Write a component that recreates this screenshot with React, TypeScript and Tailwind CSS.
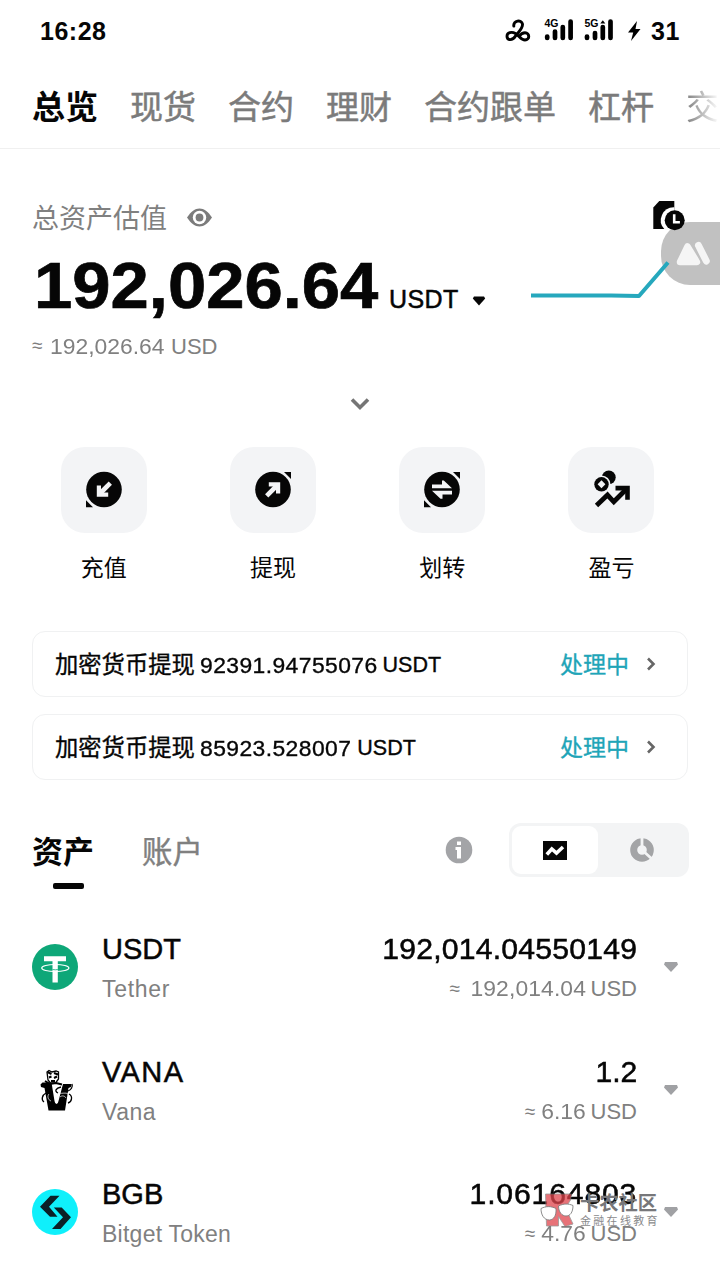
import React from "react";

const tabs = ["现货", "合约", "理财", "合约跟单", "杠杆"];

function StatusIcons() {
  return (
    <svg width="146" height="34" viewBox="0 0 146 34" fill="none" stroke="#000">
      <path
        d="M9.800 11C9 5.500 17.500 4 18.500 9C19 13 15 16.500 11.500 21C8.500 26 3 25.500 3 21.300C3 17.500 7.500 16.200 11.500 18.500C15.500 21 17 25 21 25C26 25 26 17.800 21 17.800C18 17.800 16.500 19.500 15 21.500"
        strokeWidth="2.900"
        strokeLinecap="round"
      />
      <g strokeWidth="4.700" strokeLinecap="round">
        <path d="M43.200 21.500v1.500M51 16.500v6.500M58.800 12v11M66.600 6.500v16.500M83 21.500v1.500M91 18v5M98.800 12v11M106.500 6.500v16.500" />
      </g>
      <path d="M96.300 8.500l2.500-3.200 2.500 3.200z" fill="#000" stroke="none" />
      <path d="M133 6l-9 11.500h5.200L127 26l9.500-12h-5z" fill="#000" stroke="none" />
      <g fill="#000" stroke="#fff" strokeWidth="2" paintOrder="stroke" fontFamily="Liberation Sans" fontWeight="700" fontSize="10.500">
        <text x="40.500" y="12">4G</text>
        <text x="80.500" y="12">5G</text>
      </g>
    </svg>
  );
}

function ReportIcon() {
  return (
    <svg className="absolute top-[200px] left-[652px] z-20" width="34" height="32" viewBox="0 0 34 32">
      <path d="M1.300 7.500l6-6.500h15v28h-21z" fill="#060606" />
      <path d="M22.300 7.300a13 13 0 0 0-9.800 22h9.800z" fill="#fff" />
      <circle cx="22.700" cy="20.300" r="10" fill="#060606" />
      <path d="M22.200 14.300v8h5.700" fill="none" stroke="#fff" strokeWidth="2.600" />
    </svg>
  );
}

function ActionGlyph({ kind }: { kind: string }) {
  if (kind === "pnl") {
    return (
      <svg className="relative left-px overflow-visible" width="38" height="38" viewBox="0 0 38 38">
        <circle cx="15.800" cy="6.300" r="6.900" fill="#060606" />
        <circle cx="8.500" cy="13.300" r="8.900" fill="#f3f4f6" />
        <circle cx="8.500" cy="13.300" r="7.200" fill="#060606" />
        <path d="M8.500 9.300l3.900 4-3.900 4-3.900-4z" fill="#f3f4f6" />
        <path d="M3.500 34.500L14.500 24l6.300 6.800L33 18.500" fill="none" stroke="#060606" strokeWidth="4.800" />
        <path d="M22.500 14.700h14.300v14h-4.600v-9.300h-9.700z" fill="#060606" />
      </svg>
    );
  }
  return (
    <svg width="38" height="38" viewBox="0 0 38 38">
      {kind !== "out" && <path d="M1 29.300l7 7H1z" fill="#060606" />}
      {kind !== "in" && <path d="M30 1h7v7z" fill="#060606" />}
      <circle cx="19" cy="18.500" r="17.800" fill="#060606" />
      {kind === "in" && (
        <g fill="none" stroke="#f3f4f6">
          <path d="M25.300 12.200L14.500 23" strokeWidth="4.600" />
          <path d="M13.900 14.500v9.200h9.300" strokeWidth="4.200" />
        </g>
      )}
      {kind === "out" && (
        <g fill="none" stroke="#f3f4f6">
          <path d="M12.700 24.800L23.500 14" strokeWidth="4.600" />
          <path d="M14.800 13.300h9.300v9.200" strokeWidth="4.200" />
        </g>
      )}
      {kind === "swap" && (
        <path d="M9 13.500h10v-4h1.800l8.200 7.800H9zM29 23.500h-9.500v4.300h-2L9 19.700h20z" fill="#f3f4f6" />
      )}
    </svg>
  );
}

const actions = [
  { kind: "in", label: "充值" },
  { kind: "out", label: "提现" },
  { kind: "swap", label: "划转" },
  { kind: "pnl", label: "盈亏" },
];

const withdrawals = ["92391.94755076", "85923.528007"];

function TetherLogo() {
  return (
    <svg width="46" height="46" viewBox="0 0 46 46">
      <circle cx="23" cy="23" r="23" fill="#0ea778" />
      <path d="M12 12.300h22v5h-8.200v21.200h-5.300v-21.200H12z" fill="#fff" />
      <ellipse cx="23.300" cy="24" rx="13.600" ry="3.500" fill="none" stroke="#fff" strokeWidth="1.100" />
      <path d="M20.500 25.500q3 .6 5.300 0" fill="none" stroke="#0ea778" strokeWidth=".8" />
    </svg>
  );
}

function VanaLogo() {
  return (
    <svg width="46" height="46" viewBox="0 0 46 46" fill="none" stroke="#000">
      <path d="M8.500 17.500l2-2H19.500l3 18.500q.5 3 2 3t2-3L31 17h8.500l-.5 3-2.500 1-3.500 22.500H16.500L12.500 21 9 20z" fill="#000" stroke="none" />
      <path d="M16 13l-1-8 2-1.500 3 1.500 4-1 2.500 1v7l-3 4h-5z" fill="#fff" strokeWidth="1.300" />
      <path d="M15.500 5l4 2M17 10.500l2.500-1M22 6l4 1.500M22 11l3-1.500M19 14h4M13 14l5 3 6-1 6 1.500" strokeWidth="2" />
      <path d="M14 26c-4 2-5 7-2 9M37 27c4 2 3 8-1 9M36 24c3-1 5-4 4-7M29 20c-5 1-7 4-3 6" strokeWidth="1.300" />
      <path d="M27 26c3 1 7-1 9 1M17 27c-2 2-1 6 2 7M28 30c2-2 5-1 6 1" stroke="#fff" strokeWidth=".7" />
    </svg>
  );
}

function BitgetLogo() {
  return (
    <svg width="46" height="46" viewBox="0 0 46 46">
      <circle cx="23" cy="23" r="23" fill="#0ff0fb" />
      <path d="M18.500 6.700H27.500L17 17.700l8.500 10H18l-10-10z" fill="#0b2027" />
      <path d="M21.800 18.500h7.900L39 28.300 28.500 40h-8.500l11-11.700z" fill="#0b2027" />
    </svg>
  );
}

const coins = [
  { logo: <TetherLogo />, symbol: "USDT", name: "Tether", amount: "192,014.04550149", fiat: "192,014.04", fiatClass: "w-[118px] text-right tracking-[0.1px]", nameClass: "tracking-[0.7px]", symbolClass: "", amountClass: "tracking-[0.2px]" },
  { logo: <VanaLogo />, symbol: "VANA", name: "Vana", amount: "1.2", fiat: "6.16", fiatClass: "", nameClass: "tracking-[0.5px]", symbolClass: "tracking-[1.4px]", amountClass: "" },
  { logo: <BitgetLogo />, symbol: "BGB", name: "Bitget Token", amount: "1.06164803", fiat: "4.76", fiatClass: "", nameClass: "tracking-[0.25px]", symbolClass: "", amountClass: "tracking-[0.8px]" },
];

function FloatingHandle() {
  return (
    <div className="absolute top-[222px] right-0 h-[63px] w-[59px] rounded-l-[29px] bg-[#c1c1c1]">
      <svg className="absolute top-[18px] left-[14px]" width="38" height="28" viewBox="0 0 38 28">
        <path d="M5 22L12.500 6.500L22 22z" fill="#f5f5f5" stroke="#f5f5f5" strokeWidth="6.500" strokeLinejoin="round" />
        <path d="M17.500 -1L29.500 26" stroke="#c1c1c1" strokeWidth="4" />
        <path d="M23.500 5.500l7.800 15.500" stroke="#f5f5f5" strokeWidth="7" strokeLinecap="round" />
      </svg>
    </div>
  );
}

function Watermark() {
  return (
    <div className="pointer-events-none absolute top-[1192px] left-[540px] z-20 flex gap-1">
      <svg width="36" height="37" viewBox="0 0 36 37" className="opacity-75">
        <path d="M5.500 2h26l-1 6-5 8 7.500 16-8 2.500-6.500-10V34H6.500z" fill="#e0444c" stroke="#777" strokeWidth=".8" />
        <path d="M1 16.500c5-2.500 10-2.500 15 0 .5 7-2 11-6.500 11.500C4 28 1 23 1 16.500zM18.500 14c5-2.500 10-2.500 14.500-.5 0 7-3 10.500-7 10.500s-7.500-4-7.500-10z" fill="#fff" stroke="#555" strokeWidth=".9" />
      </svg>
      <div className="flex flex-col whitespace-nowrap">
        <span className="mt-[2px] text-[19.3px] leading-[20px] font-bold text-[#77777a]">卡农社区</span>
        <span className="text-[11px] leading-[14px] tracking-[2.3px] text-[#8a8a8c]">金融在线教育</span>
      </div>
    </div>
  );
}

export default function App() {
  return (
    <div className="relative h-[1280px] w-[720px] overflow-hidden bg-white font-['Liberation_Sans','Noto_Sans_CJK_SC',sans-serif] text-[#060606]">
      <header className="flex h-[149px] flex-col border-b border-[#f0f0f0]">
        <div className="flex h-[62px] items-center justify-between pt-[2px] pr-[40px] pl-[40px] text-[25px] font-bold">
          <span className="tracking-[0.5px]">16:28</span>
          <div className="flex items-center gap-[1px]">
            <StatusIcons />
            <span className="tracking-[0.6px]">31</span>
          </div>
        </div>
        <nav className="flex h-[86px] items-center gap-[32px] overflow-hidden pt-[6px] pl-[32px] text-[33px] leading-[48px] whitespace-nowrap text-[#7b7b7b]">
          <span className="font-bold text-[#060606]">总览</span>
          {tabs.map((t) => (
            <span key={t} className="[-webkit-text-stroke:0.5px]">{t}</span>
          ))}
          <span className="bg-linear-to-r from-[#808080] to-white bg-clip-text text-transparent">交</span>
        </nav>
      </header>

      <section className="flex h-[271px] flex-col px-[32px]">
        <div className="mt-[50px] flex h-[38px] items-center gap-[20px] text-[27px] text-[#808080]">
          <span className="pt-[2px]">总资产估值</span>
          <svg className="mb-[2px]" width="25" height="19" viewBox="0 0 25 19">
            <path d="M0 9.500C4 3.500 8 .5 12.500 .5S21 3.500 25 9.500c-4 6-8 9-12.500 9S4 15.500 0 9.500z" fill="#7b7b7b" />
            <circle cx="12.500" cy="9.500" r="6.700" fill="#fff" />
            <circle cx="12.500" cy="9.500" r="3.900" fill="#7b7b7b" />
          </svg>
        </div>
        <div className="mt-[13px] flex h-[72px] items-baseline">
          <span className="ml-[2px] w-[349px] origin-left scale-x-[1.075] text-[64px] leading-[72px] font-bold [-webkit-text-stroke:0.7px]">192,026.64</span>
          <span className="ml-[6px] w-[71px] text-[25px] tracking-[0.4px] [-webkit-text-stroke:0.5px]">USDT</span>
          <svg className="mb-[3px] ml-[12px] self-end -translate-y-[12px]" width="14" height="12" viewBox="0 0 14 12">
            <path d="M2 1.500h10l1.200 2-6.200 7-6.200-7z" fill="#060606" />
          </svg>
          <svg className="relative z-10 mt-[7px] ml-[44px] shrink-0 self-start" width="142" height="44" viewBox="0 0 142 44">
            <path d="M1 38.500h80l28 .5L138 5.500" fill="none" stroke="#26a8bd" strokeWidth="4" strokeLinejoin="round" />
          </svg>
        </div>
        <div className="mt-[8px] flex h-[32px] items-center text-[22px] text-[#808080]">
          <span className="mr-[7px] w-[11px] text-[19px]">≈</span>
          <span className="w-[115px] origin-left scale-x-[1.04]">192,026.64</span>
          <span className="ml-[6px]">USD</span>
        </div>
        <svg className="mx-auto mt-[35px]" width="20" height="14" viewBox="0 0 20 14">
          <path d="M2 2.500l8 8 8-8" fill="none" stroke="#757575" strokeWidth="3.600" />
        </svg>
      </section>

      <section className="grid h-[211px] grid-cols-4 pt-[27px] pr-[24px] pl-[19px]">
        {actions.map((a) => (
          <div key={a.kind} className="flex flex-col items-center">
            <div className="flex h-[86px] w-[86px] items-center justify-center rounded-[24px] bg-[#f3f4f6]">
              <ActionGlyph kind={a.kind} />
            </div>
            <span className="mt-[17.500px] text-[23px] leading-[34px]">{a.label}</span>
          </div>
        ))}
      </section>

      <section className="flex flex-col gap-[17px] px-[32px]">
        {withdrawals.map((w) => (
          <div key={w} className="flex h-[66px] items-center rounded-[13px] border-[1.500px] border-[#f0f1f2] pt-[2px] pr-[31px] pl-[22px] [-webkit-text-stroke:0.35px]">
            <span className="text-[23.3px]">加密货币提现</span>
            <span className="ml-[5px] origin-left scale-x-[1.04] text-[22px] tracking-[0.4px]">{w}</span>
            <span className="ml-[12px] text-[21.5px]">USDT</span>
            <span className="ml-auto text-[23px] text-[#1fa5b8]">处理中</span>
            <svg className="mb-[2px] ml-[17px]" width="10" height="14" viewBox="0 0 10 14">
              <path d="M2 1.500l5.500 5.500L2 12.500" fill="none" stroke="#666" strokeWidth="2.600" />
            </svg>
          </div>
        ))}
      </section>

      <section className="mt-[42px] flex h-[70px] pr-[31px] pl-[32px]">
        <div className="flex flex-col items-center">
          <span className="mt-[9px] text-[31px] leading-[44px] font-bold">资产</span>
          <span className="mt-[8px] ml-[11px] h-[6px] w-[31px] rounded-[2px] bg-[#060606]" />
        </div>
        <span className="mt-[8px] ml-[48px] text-[30.500px] leading-[44px] text-[#808080] [-webkit-text-stroke:0.4px]">账户</span>
        <svg className="mt-[14px] ml-auto" width="28" height="28" viewBox="0 0 28 28">
          <circle cx="14" cy="14" r="13.300" fill="#a3a4a7" />
          <path d="M12 5.500h4v3.500h-4zM10.500 11h5.500v11.500h-4v-8.500h-1.500z" fill="#fff" />
        </svg>
        <div className="mt-px ml-[36px] flex h-[54px] w-[180px] rounded-[12px] bg-[#f3f4f5] p-[3px]">
          <div className="flex w-[86px] items-center justify-center rounded-[9px] bg-white">
            <svg width="24" height="19" viewBox="0 0 24 19">
              <path d="M0 0h24v19H0z" fill="#060606" />
              <path d="M3.800 13.500l5-5.500 4.700 4L20 6" fill="none" stroke="#fff" strokeWidth="3.600" />
            </svg>
          </div>
          <div className="flex flex-1 items-center justify-center">
            <svg width="24" height="24" viewBox="0 0 24 24">
              <circle cx="12" cy="12" r="8.300" fill="none" stroke="#a3a4a6" strokeWidth="7" />
              <path d="M12 12V0M12 12l10 9" stroke="#f3f4f5" strokeWidth="2.800" />
            </svg>
          </div>
        </div>
      </section>

      <section className="mt-[14px] flex flex-col">
        {coins.map((c) => (
          <div key={c.symbol} className="flex h-[122.500px] items-center pr-[42px] pl-[32px]">
            {c.logo}
            <div className="ml-[24px] flex flex-col pt-[4px] whitespace-nowrap">
              <span className={`text-[29px] leading-[40px] [-webkit-text-stroke:0.5px] ${c.symbolClass}`}>{c.symbol}</span>
              <span className={`text-[23px] leading-[40px] text-[#808080] ${c.nameClass}`}>{c.name}</span>
            </div>
            <div className="ml-auto flex flex-col items-end pt-[4px]">
              <span className={`origin-right scale-x-[1.04] text-[29px] leading-[40px] [-webkit-text-stroke:0.5px] ${c.amountClass}`}>{c.amount}</span>
              <span className="flex text-[22px] leading-[40px] text-[#808080]">
                <span className="mr-[8px] w-[10px] text-[19px]">≈</span>
                <span className={`origin-right scale-x-[1.04] ${c.fiatClass}`}>{c.fiat}</span>
                <span className="ml-[5px]">USD</span>
              </span>
            </div>
            <svg className="ml-[27px]" width="14" height="12" viewBox="0 0 14 12">
              <path d="M1 1h12l1 2.500-7 7.500-7-7.500z" fill="#a0a1a4" />
            </svg>
          </div>
        ))}
      </section>

      <ReportIcon />
      <FloatingHandle />
      <Watermark />
    </div>
  );
}
